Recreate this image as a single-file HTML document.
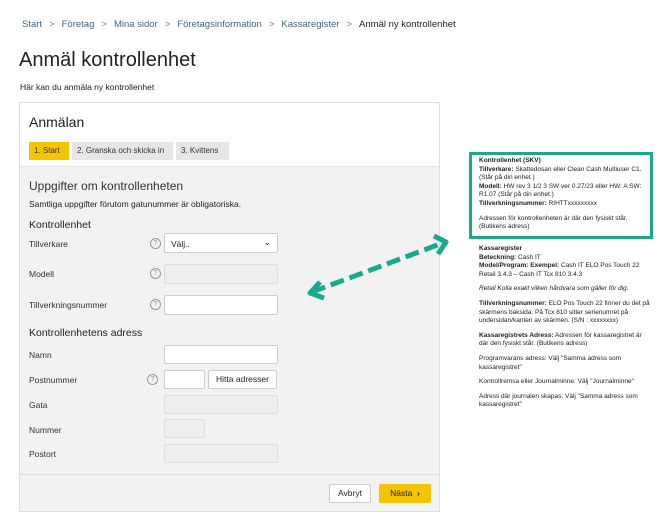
<!DOCTYPE html>
<html><head><meta charset="utf-8"><style>
*{margin:0;padding:0;box-sizing:border-box}
body{width:670px;height:530px;background:#fff;font-family:"Liberation Sans",sans-serif;color:#222;position:relative;overflow:hidden}
.a{position:absolute;white-space:nowrap}
.bc{top:19px;left:22px;font-size:9.5px;color:#3f6583}
.bc span.s{color:#777;margin:0 7px}
.bc .cur{color:#222}
.card{position:absolute;left:19px;top:102px;width:421px;height:410px;border:1px solid #ddd;background:#fff}
.grey{position:absolute;left:0;top:63px;width:419px;height:308px;background:#f2f2f2;border-top:1px solid #e4e4e4}
.foot{position:absolute;left:0;top:371px;width:419px;height:37px;background:#f2f2f2;border-top:1px solid #ddd}
.step{position:absolute;top:39px;height:18px;font-size:8px;line-height:18px;padding-left:5px;background:#e6e6e6;color:#333}
.lbl{font-size:8.5px;color:#333}
.in{position:absolute;background:#fff;border:1px solid #ccc;border-radius:2px}
.dis{background:#eee;border-color:#ddd}
.q{position:absolute;width:11px;height:11px;border:1px solid #999;border-radius:50%;font-size:7px;line-height:9px;text-align:center;color:#999}
.r{position:absolute;font-size:6.5px;line-height:8.6px;color:#222;white-space:normal}
.r p{margin-bottom:6px}
</style></head><body>
<div class="a bc">Start<span class="s">&gt;</span>Företag<span class="s">&gt;</span>Mina sidor<span class="s">&gt;</span>Företagsinformation<span class="s">&gt;</span>Kassaregister<span class="s">&gt;</span><span class="cur">Anmäl ny kontrollenhet</span></div>
<div class="a" style="top:49px;left:19px;font-size:20px;color:#222">Anmäl kontrollenhet</div>
<div class="a" style="top:82px;left:20px;font-size:8.5px">Här kan du anmäla ny kontrollenhet</div>
<div class="card">
<div class="a" style="top:11px;left:9px;font-size:14px">Anmälan</div>
<div class="step" style="left:9px;width:40px;background:#f5c400">1. Start</div>
<div class="step" style="left:52px;width:101px">2. Granska och skicka in</div>
<div class="step" style="left:156px;width:53px">3. Kvittens</div>
<div class="grey"></div>
<div class="foot"></div>
<div class="a" style="top:76px;left:9px;font-size:12px;color:#333">Uppgifter om kontrollenheten</div>
<div class="a" style="top:96px;left:9px;font-size:8.5px">Samtliga uppgifter förutom gatunummer är obligatoriska.</div>
<div class="a" style="top:116px;left:9px;font-size:10.5px">Kontrollenhet</div>
<div class="a lbl" style="top:136px;left:9px">Tillverkare</div>
<div class="q" style="left:130px;top:135px">?</div>
<div class="in" style="left:144px;top:130px;width:114px;height:20px;font-size:8.5px;padding:5px 6px">Välj..<span style="position:absolute;right:6px;top:3px;font-size:9px">&#8964;</span></div>
<div class="a lbl" style="top:166px;left:9px">Modell</div>
<div class="q" style="left:130px;top:165px">?</div>
<div class="in dis" style="left:144px;top:161px;width:114px;height:20px"></div>
<div class="a lbl" style="top:197px;left:9px">Tillverkningsnummer</div>
<div class="q" style="left:130px;top:196px">?</div>
<div class="in" style="left:144px;top:192px;width:114px;height:20px"></div>
<div class="a" style="top:224px;left:9px;font-size:10.5px">Kontrollenhetens adress</div>
<div class="a lbl" style="top:247px;left:9px">Namn</div>
<div class="in" style="left:144px;top:242px;width:114px;height:19px"></div>
<div class="a lbl" style="top:272px;left:9px">Postnummer</div>
<div class="q" style="left:127px;top:271px">?</div>
<div class="in" style="left:144px;top:267px;width:41px;height:19px"></div>
<div class="in" style="left:188px;top:267px;width:69px;height:19px;font-size:8.5px;text-align:center;line-height:17px">Hitta adresser</div>
<div class="a lbl" style="top:297px;left:9px">Gata</div>
<div class="in dis" style="left:144px;top:292px;width:114px;height:19px"></div>
<div class="a lbl" style="top:322px;left:9px">Nummer</div>
<div class="in dis" style="left:144px;top:316px;width:41px;height:19px"></div>
<div class="a lbl" style="top:346px;left:9px">Postort</div>
<div class="in dis" style="left:144px;top:341px;width:114px;height:19px"></div>
<div class="in" style="left:309px;top:381px;width:42px;height:19px;font-size:8.5px;text-align:center;line-height:17px">Avbryt</div>
<div class="in" style="left:359px;top:381px;width:52px;height:19px;background:#f5c400;border-color:#f5c400;font-size:8.5px;text-align:center;line-height:17px">Nästa &nbsp;<b>&#8250;</b></div>
</div>
<svg class="a" style="left:300px;top:230px" width="160" height="75"><g stroke="#1aa88e" stroke-width="5" fill="none"><path d="M12 62 L140 14" stroke-dasharray="14 6"/><path d="M20 52 L10 63 L24 68" stroke-linejoin="round"/><path d="M134 6 L146 12 L138 24" stroke-linejoin="round"/></g></svg>
<div style="position:absolute;left:469px;top:152px;width:184px;height:87px;border:3px solid #1aa88e"></div>
<div class="r" style="left:479px;top:157px;width:172px"><p><b>Kontrollenhet (SKV)</b><br><b>Tillverkare:</b> Skattedosan eller Clean Cash Multiuser C1. (Står på din enhet.)<br><b>Modell:</b> HW rev 3 1/2 3 SW ver 0.27/23 eller HW: A SW: R1.07 (Står på din enhet.)<br><b>Tillverkningsnummer:</b> RIHTTxxxxxxxxx</p><p>Adressen för kontrollenheten är där den fysiskt står. (Butikens adress)</p></div>
<div class="r" style="left:479px;top:245px;width:172px"><p><b>Kassaregister</b><br><b>Beteckning:</b> Cash IT<br><b>Model/Program: Exempel:</b> Cash IT ELO Pos Touch 22 Retail 3.4.3 – Cash IT Tcx 810 3.4.3</p><p><i>Retail Kolla exakt vilken hårdvara som gäller för dig.</i></p><p><b>Tillverkningsnummer:</b> ELO Pos Touch 22 finner du det på skärmens baksida. På Tcx 810 sitter serienumret på undersidan/kanten av skärmen. (S/N : xxxxxxxx)</p><p><b>Kassaregistrets Adress:</b> Adressen för kassaregistret är där den fysiskt står. (Butikens adress)</p><p>Programvarans adress: Välj "Samma adress som kassaregistret"</p><p>Kontrollremsa eller Journalminne: Välj "Journalminne"</p><p>Adress där journalen skapas: Välj "Samma adress som kassaregistret"</p></div>
</body></html>
